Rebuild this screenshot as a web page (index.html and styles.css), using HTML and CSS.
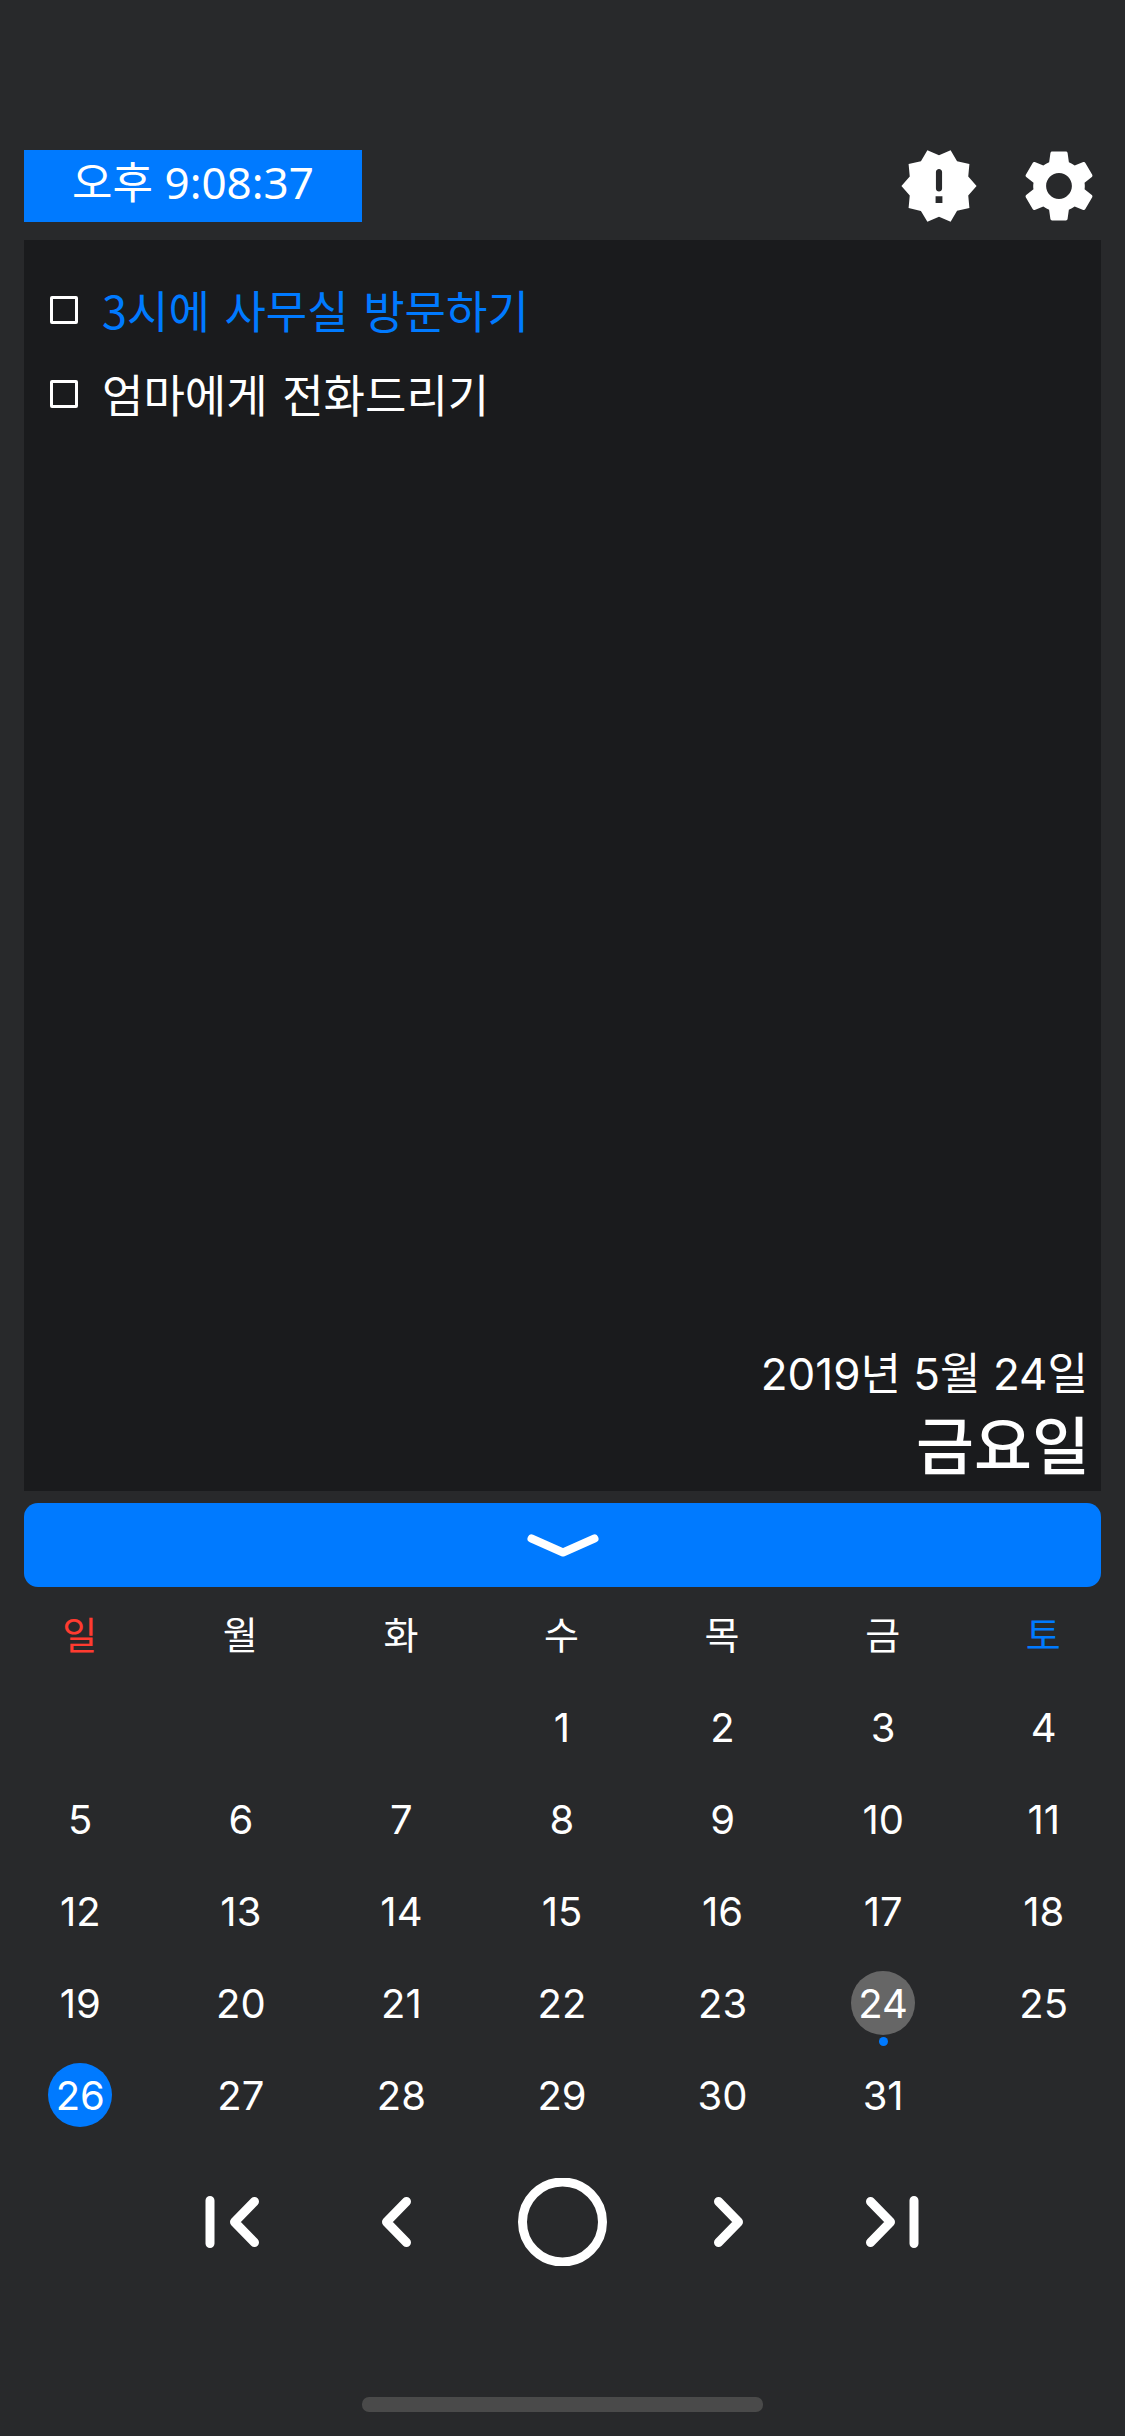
FILE: index.html
```html
<!DOCTYPE html>
<html lang="ko">
<head>
<meta charset="utf-8">
<title>Calendar</title>
<link rel="stylesheet" href="styles.css">
</head>
<body>
<div class="app">
  <header class="topbar">
    <div class="clock">오후 9:08:37</div>
    <div class="actions">
      <svg class="icon-alert" viewBox="0 0 24 24"><path d="M23 12l-2.44-2.78.34-3.68-3.61-.82-1.89-3.18L12 3 8.6 1.54 6.71 4.72l-3.61.81.34 3.68L1 12l2.44 2.78-.34 3.69 3.61.82 1.89 3.18L12 21l3.4 1.46 1.89-3.18 3.61-.82-.34-3.68L23 12zm-10 5h-2v-2h2v2zm-.1-4.3c0 .5-.4.9-.9.9s-.9-.4-.9-.9V7.9c0-.5.4-.9.9-.9s.9.4.9.9v4.8z"/></svg>
      <svg class="icon-gear" viewBox="0 0 24 24"><path fill-rule="evenodd" d="M19.14 12.94c.04-.3.06-.61.06-.94 0-.32-.02-.64-.07-.94l2.03-1.58a.49.49 0 0 0 .12-.61l-1.92-3.32a.488.488 0 0 0-.59-.22l-2.39.96c-.5-.38-1.03-.7-1.62-.94l-.36-2.54a.484.484 0 0 0-.48-.41h-3.84c-.24 0-.43.17-.47.41l-.36 2.54c-.59.24-1.13.57-1.62.94l-2.39-.96c-.22-.08-.47 0-.59.22L2.74 8.87c-.12.21-.08.47.12.61l2.03 1.58c-.05.3-.09.63-.09.94s.02.64.07.94l-2.03 1.58a.49.49 0 0 0-.12.61l1.92 3.32c.12.22.37.29.59.22l2.39-.96c.5.38 1.03.7 1.62.94l.36 2.54c.05.24.24.41.48.41h3.84c.24 0 .44-.17.47-.41l.36-2.54c.59-.24 1.13-.56 1.62-.94l2.39.96c.22.08.47 0 .59-.22l1.92-3.32c.12-.22.07-.47-.12-.61l-2.01-1.58zM12 15.6c-1.98 0-3.6-1.62-3.6-3.6s1.62-3.6 3.6-3.6 3.6 1.62 3.6 3.6-1.62 3.6-3.6 3.6z"/></svg>
    </div>
  </header>

  <section class="panel">
    <ul class="todos">
      <li class="todo todo-active"><span class="box"></span><span>3시에 사무실 방문하기</span></li>
      <li class="todo"><span class="box"></span><span>엄마에게 전화드리기</span></li>
    </ul>
    <div class="date">
      <div class="date-full">2019년 5월 24일</div>
      <div class="date-day">금요일</div>
    </div>
  </section>

  <button class="toggle" type="button" aria-label="접기">
    <svg class="icon-down" viewBox="0 0 76 24"><path d="M6.5 5.5L38 19.5L69.5 5.5"/></svg>
  </button>

  <section class="calendar">
    <div class="cell head sun">일</div><div class="cell head">월</div><div class="cell head">화</div><div class="cell head">수</div><div class="cell head">목</div><div class="cell head">금</div><div class="cell head sat">토</div>
    <div class="cell"></div><div class="cell"></div><div class="cell"></div><div class="cell">1</div><div class="cell">2</div><div class="cell">3</div><div class="cell">4</div>
    <div class="cell">5</div><div class="cell">6</div><div class="cell">7</div><div class="cell">8</div><div class="cell">9</div><div class="cell">10</div><div class="cell">11</div>
    <div class="cell">12</div><div class="cell">13</div><div class="cell">14</div><div class="cell">15</div><div class="cell">16</div><div class="cell">17</div><div class="cell">18</div>
    <div class="cell">19</div><div class="cell">20</div><div class="cell">21</div><div class="cell">22</div><div class="cell">23</div><div class="cell"><span class="day selected">24</span></div><div class="cell">25</div>
    <div class="cell"><span class="day today">26</span></div><div class="cell">27</div><div class="cell">28</div><div class="cell">29</div><div class="cell">30</div><div class="cell">31</div><div class="cell"></div>
  </section>

  <nav class="nav">
    <svg class="nav-icon" viewBox="0 0 165 88"><path d="M60 22.5V65.5M104.5 23.5L84.5 44L104.5 64.5"/></svg>
    <svg class="nav-icon" viewBox="0 0 165 88"><path d="M91.5 23.5L71.5 44L91.5 64.5"/></svg>
    <svg class="nav-icon" viewBox="0 0 165 88"><circle cx="82.5" cy="44" r="40"/></svg>
    <svg class="nav-icon" viewBox="0 0 165 88"><path d="M73.5 23.5L93.5 44L73.5 64.5"/></svg>
    <svg class="nav-icon" viewBox="0 0 165 88"><path d="M60.5 23.5L80.5 44L60.5 64.5M104 22.5V65.5"/></svg>
  </nav>

  <div class="home-indicator"></div>
</div>
</body>
</html>
```

FILE: styles.css
```css
* { box-sizing: border-box; }

html, body {
  margin: 0;
  padding: 0;
  background: #28292b;
}

.app {
  width: 1125px;
  height: 2436px;
  padding-top: 150px;
  display: flex;
  flex-direction: column;
  color: #fff;
  font-family: Inter, "Noto Sans CJK KR", sans-serif;
  overflow: hidden;
}

.topbar {
  height: 72px;
  margin: 0 24px 18px;
  display: flex;
  justify-content: space-between;
  align-items: center;
}

.clock {
  width: 338px;
  height: 72px;
  padding-bottom: 9px;
  background: #007aff;
  display: flex;
  align-items: center;
  justify-content: center;
  font-family: "Noto Sans", "Noto Sans CJK KR", sans-serif;
  font-size: 44px;
  line-height: 1;
}

.actions {
  display: flex;
  align-items: center;
  gap: 36px;
  margin-right: -1px;
}

.icon-alert, .icon-gear {
  width: 82px;
  height: 82px;
  fill: #fff;
  flex: none;
}

.icon-gear {
  width: 86px;
  height: 86px;
}

.panel {
  height: 1251px;
  margin: 0 24px;
  background: #1a1b1d;
  display: flex;
  flex-direction: column;
  justify-content: space-between;
  padding: 40px 13px 8px 26px;
}

.todos {
  list-style: none;
  margin: 0;
  padding: 0;
  display: flex;
  flex-direction: column;
  gap: 24px;
  font-family: "Noto Sans CJK KR", sans-serif;
  font-size: 45px;
  line-height: 60px;
  word-spacing: 2px;
}

.todo {
  display: flex;
  align-items: center;
  gap: 24px;
}

.todo-active { color: #007aff; }

.box {
  width: 28px;
  height: 28px;
  border: 3px solid #fff;
  border-radius: 2px;
  flex: none;
}

.date { text-align: right; }

.date-full {
  font-size: 44px;
  line-height: 60px;
  margin-bottom: 3px;
  position: relative;
  top: -3px;
}

.date-day {
  font-size: 63px;
  line-height: 73px;
  font-weight: 500;
  margin-right: -2px;
}

.toggle {
  height: 84px;
  margin: 12px 24px 2px;
  padding: 0;
  border: 0;
  border-radius: 14px;
  background: #007aff;
  display: flex;
  align-items: center;
  justify-content: center;
}

.icon-down {
  width: 76px;
  height: 24px;
  fill: none;
  stroke: #fff;
  stroke-width: 8;
  stroke-linecap: round;
  stroke-linejoin: round;
}

.calendar {
  display: grid;
  grid-template-columns: repeat(7, 1fr);
  grid-auto-rows: 92px;
  padding-right: 1px;
  font-size: 40px;
}

.cell {
  display: flex;
  align-items: center;
  justify-content: center;
}

.head {
  font-size: 38px;
  padding: 0 1px 5px 0;
}
.sun { color: #ff3b30; }
.sat { color: #007aff; }

.day {
  position: relative;
  width: 64px;
  height: 64px;
  border-radius: 50%;
  display: flex;
  align-items: center;
  justify-content: center;
}

.today { background: #007aff; }
.selected { background: #666; }

.selected::after {
  content: "";
  position: absolute;
  left: 50%;
  bottom: -11px;
  width: 9px;
  height: 9px;
  margin-left: -4.5px;
  border-radius: 50%;
  background: #007aff;
}

.nav {
  margin-top: 37px;
  display: flex;
  justify-content: center;
}

.nav-icon {
  width: 165px;
  height: 88px;
  fill: none;
  stroke: #fff;
  stroke-width: 9;
  stroke-linecap: round;
  stroke-linejoin: round;
}

.home-indicator {
  width: 401px;
  height: 15px;
  margin: 131px auto 0;
  border-radius: 7px;
  background: #4a4a4a;
}
```
